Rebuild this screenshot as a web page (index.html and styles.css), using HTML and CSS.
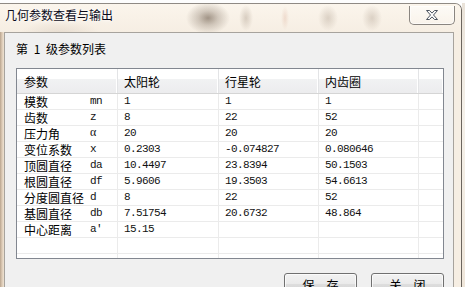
FILE: index.html
```html
<!DOCTYPE html>
<html lang="zh">
<head>
<meta charset="utf-8">
<link rel="stylesheet" href="styles.css">
</head>
<body>
<div class="desk">
  <div class="topstrip"></div>
  <div class="deskrow">
    <div class="window">
      <div class="titlebar">
        <span class="title">几何参数查看与输出</span>
        <button class="close" aria-label="关闭">
          <svg width="14" height="10" viewBox="0 0 14 10"><path d="M1.5 0.5h3l2.5 2.6 2.5-2.6h3l-4 4.5 4 4.5h-3l-2.5-2.6-2.5 2.6h-3l4-4.5z" fill="#fbfbfb" stroke="#4d5560" stroke-width="1" stroke-linejoin="round"/></svg>
        </button>
      </div>
      <div class="framebody">
        <div class="client">
          <div class="caption">第 1 级参数列表</div>
          <div class="grid">
            <div class="hrow">
              <div class="hc c1">参数</div>
              <div class="hc c2">太阳轮</div>
              <div class="hc c3">行星轮</div>
              <div class="hc c4">内齿圈</div>
              <div class="hc c5"></div>
            </div>
            <div class="row"><div class="c c1"><span class="nm">模数</span><span class="sym">mn</span></div><div class="c c2 num">1</div><div class="c c3 num">1</div><div class="c c4 num">1</div><div class="c c5"></div></div>
            <div class="row"><div class="c c1"><span class="nm">齿数</span><span class="sym">z</span></div><div class="c c2 num">8</div><div class="c c3 num">22</div><div class="c c4 num">52</div><div class="c c5"></div></div>
            <div class="row"><div class="c c1"><span class="nm">压力角</span><span class="sym alpha">α</span></div><div class="c c2 num">20</div><div class="c c3 num">20</div><div class="c c4 num">20</div><div class="c c5"></div></div>
            <div class="row"><div class="c c1"><span class="nm">变位系数</span><span class="sym">x</span></div><div class="c c2 num">0.2303</div><div class="c c3 num">-0.074827</div><div class="c c4 num">0.080646</div><div class="c c5"></div></div>
            <div class="row"><div class="c c1"><span class="nm">顶圆直径</span><span class="sym">da</span></div><div class="c c2 num">10.4497</div><div class="c c3 num">23.8394</div><div class="c c4 num">50.1503</div><div class="c c5"></div></div>
            <div class="row"><div class="c c1"><span class="nm">根圆直径</span><span class="sym">df</span></div><div class="c c2 num">5.9606</div><div class="c c3 num">19.3503</div><div class="c c4 num">54.6613</div><div class="c c5"></div></div>
            <div class="row"><div class="c c1"><span class="nm">分度圆直径</span><span class="sym">d</span></div><div class="c c2 num">8</div><div class="c c3 num">22</div><div class="c c4 num">52</div><div class="c c5"></div></div>
            <div class="row"><div class="c c1"><span class="nm">基圆直径</span><span class="sym">db</span></div><div class="c c2 num">7.51754</div><div class="c c3 num">20.6732</div><div class="c c4 num">48.864</div><div class="c c5"></div></div>
            <div class="row"><div class="c c1"><span class="nm">中心距离</span><span class="sym">a'</span></div><div class="c c2 num">15.15</div><div class="c c3 num"></div><div class="c c4 num"></div><div class="c c5"></div></div>
            <div class="row"><div class="c c1"></div><div class="c c2"></div><div class="c c3"></div><div class="c c4"></div><div class="c c5"></div></div>
            <div class="row"><div class="c c1"></div><div class="c c2"></div><div class="c c3"></div><div class="c c4"></div><div class="c c5"></div></div>
          </div>
          <div class="buttons">
            <button class="btn">保　存</button>
            <button class="btn">关　闭</button>
          </div>
        </div>
      </div>
    </div>
    <div class="deskright"></div>
  </div>
</div>
</body>
</html>
```
FILE: styles.css
```css
* { box-sizing: border-box; }
html, body { margin: 0; padding: 0; }
body {
  width: 465px;
  height: 287px;
  overflow: hidden;
  background: #ffffff;
  font-family: "Noto Sans CJK SC", "Noto Sans", sans-serif;
  font-size: 12px;
  color: #000;
}
.desk { display: flex; flex-direction: column; height: 287px; }
.topstrip { height: 3px; background: #fdfdfd; flex: none; }
.deskrow { display: flex; flex: 1; min-height: 0; }
.deskright {
  flex: 1;
  background: linear-gradient(#e9e2d8, #f5f1ea 40%, #efe6da);
}
.window {
  width: 462px;
  flex: none;
  display: flex;
  flex-direction: column;
  border-top: 1px solid #8f8a84;
  border-right: 1px solid #6b655e;
  border-radius: 0 7px 0 0;
  background: #f6eee3;
  overflow: hidden;
}
.titlebar {
  height: 28px;
  flex: none;
  display: flex;
  align-items: flex-start;
  padding: 3px 0 0 5px;
  background:
    radial-gradient(ellipse 22px 16px at 208px 14px, rgba(90,72,55,0.55), rgba(90,72,55,0.25) 45%, rgba(90,72,55,0) 100%),
    radial-gradient(ellipse 7px 13px at 246px 14px, rgba(130,110,90,0.28), rgba(130,110,90,0) 100%),
    radial-gradient(ellipse 4px 12px at 285px 14px, rgba(200,130,100,0.2), rgba(200,130,100,0) 100%),
    radial-gradient(ellipse 10px 13px at 328px 14px, rgba(130,110,90,0.25), rgba(130,110,90,0) 100%),
    radial-gradient(ellipse 10px 13px at 372px 14px, rgba(130,110,90,0.25), rgba(130,110,90,0) 100%),
    radial-gradient(ellipse 40px 14px at 60px 30px, rgba(170,150,130,0.2), rgba(170,150,130,0) 100%),
    linear-gradient(#fbf5ec, #f6eee3);
}
.title {
  font-size: 12px;
  line-height: 16px;
  color: #0a0a1a;
  text-shadow: 0 0 6px rgba(255,255,255,0.9), 0 0 3px rgba(255,255,255,0.9);
}
.close {
  margin: -1px 6px 0 auto;
  width: 46px;
  height: 19px;
  border: 1px solid #8a8580;
  border-top: none;
  border-radius: 0 0 5px 5px;
  background: linear-gradient(rgba(255,255,255,0.55), rgba(255,255,255,0.2));
  box-shadow: inset 0 0 0 1px rgba(255,255,255,0.6);
  padding: 0;
  display: flex;
  align-items: center;
  justify-content: center;
}
.close svg { display: block; }
.framebody {
  flex: 1;
  display: flex;
  padding: 0 7px 0 4px;
  background: linear-gradient(90deg, #b9a48e 0, #dccab5 2px, #efe3d3 4px, #f6eee3 4px);
  min-height: 0;
}
.client {
  flex: 1;
  background: #f0f0f0;
  border: 1px solid #a7a39d;
  border-bottom: none;
  padding: 8px 9px 0 11px;
  display: flex;
  flex-direction: column;
}
.caption {
  line-height: 16px;
  height: 16px;
  word-spacing: 3px;
}
.grid {
  margin-top: 11px;
  height: 191px;
  border: 1px solid #828790;
  background: #fff;
  overflow: hidden;
  flex: none;
}
.hrow {
  display: flex;
  height: 25px;
  border-bottom: 1px solid #d5d5d5;
  background: linear-gradient(#ffffff 0, #ffffff 40%, #f1f2f3 42%, #ececee 100%);
}
.hc {
  display: flex;
  align-items: center;
  padding-left: 6px;
  border-right: 1px solid #e3e4e6;
  box-shadow: inset -1px 0 0 #fff;
  line-height: 16px;
  padding-top: 1px;
}
.hc.c1 { padding-left: 7px; }
.row {
  display: flex;
  height: 16px;
  border-bottom: 1px solid #ebebeb;
}
.c {
  display: flex;
  align-items: center;
  border-right: 1px solid #ebebeb;
  padding-left: 6px;
  line-height: 15px;
  white-space: nowrap;
  overflow: hidden;
}
.c1 { width: 101px; flex: none; }
.c2 { width: 101px; flex: none; }
.c3 { width: 100px; flex: none; }
.c4 { width: 100px; flex: none; }
.c5 { flex: 1; border-right: none; }
.c.c1 { padding-left: 7px; }
.nm { width: 66px; flex: none; font-size: 12px; }
.sym, .num {
  font-family: "Liberation Mono", "DejaVu Sans Mono", monospace;
  font-size: 11px;
  letter-spacing: -0.6px;
  color: #111;
}
.sym.alpha { font-family: "Liberation Serif", serif; font-size: 12px; line-height: 13px; align-self: flex-start; }
.buttons {
  margin-top: 14px;
  display: flex;
  justify-content: flex-end;
  gap: 14px;
}
.btn {
  width: 73px;
  height: 23px;
  border: 1px solid #707070;
  border-radius: 3px;
  background: linear-gradient(#f2f2f2 0, #ebebeb 45%, #dddddd 50%, #cfcfcf 100%);
  box-shadow: inset 0 0 0 1px rgba(255,255,255,0.7);
  font-family: "Noto Sans CJK SC", sans-serif;
  font-size: 12px;
  color: #000;
  line-height: 16px;
  display: flex;
  justify-content: center;
  align-items: flex-start;
  padding: 3px 0 0 0;
}
```
